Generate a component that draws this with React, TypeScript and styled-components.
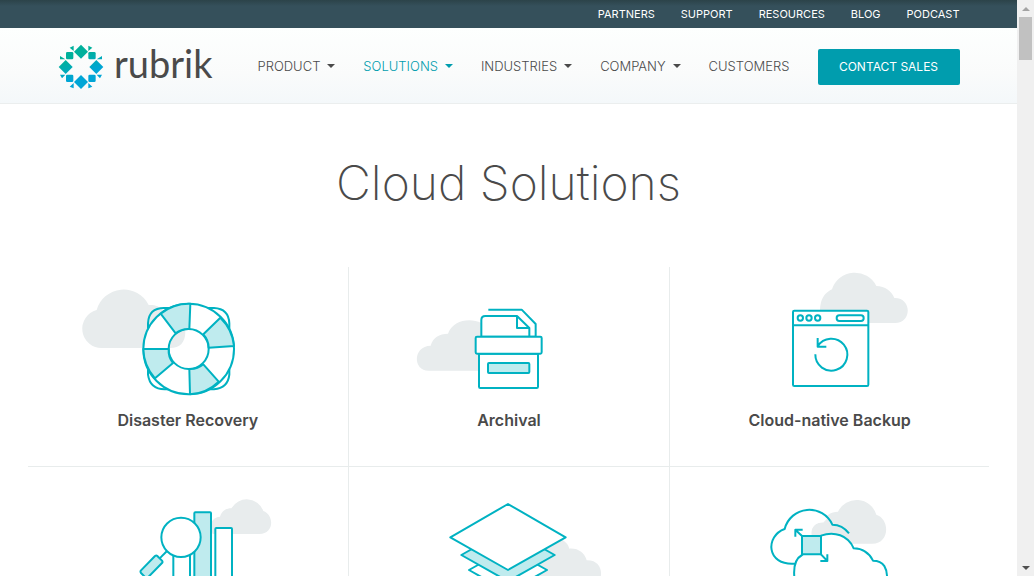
import React from "react";
import styled, { createGlobalStyle } from "styled-components";

const teal = "#00b2c2";
const tint = "#bfebee";
const haze = "#e8eced";
const ink = "#4a4a4a";

const GlobalStyle = createGlobalStyle`
  * { box-sizing: border-box; }
  body { margin: 0; background: #fff; color: ${ink}; font-family: Inter, "Liberation Sans", sans-serif; }
  ul { list-style: none; margin: 0; padding: 0; }
  a { color: inherit; text-decoration: none; }
`;

const Window = styled.div`
  display: grid;
  grid-template-columns: minmax(0, 1fr) 17px;
  height: 100vh;
  overflow: hidden;
`;

const Page = styled.div`
  overflow: hidden;
`;

const Container = styled.div`
  max-width: 962px;
  margin: 0 auto;
`;

const TopBar = styled.div`
  background: linear-gradient(#2c4349, #35505b 6px);
  color: #fff;
`;

const TopLinks = styled.ul`
  display: flex;
  justify-content: flex-end;
  gap: 26px;
  padding: 0 30px;
  font-size: 11px;
  line-height: 28px;
`;

const Header = styled.header`
  background: linear-gradient(#fdfffe, #fafbfb 60%, #f4f8fa);
  border-bottom: 1px solid #ebeeee;
`;

const HeaderRow = styled(Container)`
  display: flex;
  align-items: center;
  height: 75px;
  padding: 2px 30px 0;
`;

const Logo = styled.a`
  display: flex;
  align-items: center;
  justify-content: space-between;
  width: 155px;
  height: 46px;
  svg { flex: none; }
`;

const Wordmark = styled.span`
  font-family: Lato, sans-serif;
  font-size: 38px;
  line-height: 38px;
  height: 46px;
`;

const Nav = styled.nav`
  flex: 1;
  margin: 0 28px 0 45px;
  padding-bottom: 2px;
`;

const NavList = styled.ul`
  display: flex;
  justify-content: space-between;
`;

const NavLink = styled.a<{ $active?: boolean }>`
  display: flex;
  align-items: center;
  gap: 7px;
  font-size: 13px;
  line-height: 20px;
  font-weight: 300;
  color: ${(p) => (p.$active ? "#009dae" : ink)};
`;

const Caret = styled.span`
  border: 4px solid transparent;
  border-top-color: currentColor;
  border-bottom: 0;
`;

const Contact = styled.button`
  width: 142px;
  height: 36px;
  padding: 0;
  border: 0;
  border-radius: 2px;
  background: #009dae;
  color: #fff;
  font: 400 12px/36px Inter, sans-serif;
`;

const Title = styled.h1`
  margin: 0;
  padding: 51px 0 56px;
  font-size: 48px;
  line-height: 56px;
  font-weight: 200;
  text-align: center;
`;

const Grid = styled.ul`
  display: grid;
  grid-template-columns: repeat(3, 1fr);
`;

const Cell = styled.li`
  border-left: 1px solid #e8ecec;
  border-bottom: 1px solid #e8ecec;
  min-height: 200px;
  &:nth-child(3n + 1) { border-left: 0; }
`;

const Card = styled.a`
  display: flex;
  flex-direction: column;
  align-items: center;
  gap: 11px;
  padding-bottom: 34px;
`;

const Art = styled.svg`
  width: 220px;
  height: 130px;
  fill: none;
  stroke: ${teal};
  stroke-width: 6;
  stroke-linejoin: round;
`;

const Label = styled.span`
  font-size: 16px;
  line-height: 24px;
  font-weight: 600;
`;

const ScrollTrack = styled.div`
  display: flex;
  flex-direction: column;
  align-items: center;
  background: #f0f0f0;
`;

const ScrollArrow = styled.span<{ $down?: boolean }>`
  display: flex;
  align-items: center;
  justify-content: center;
  width: 17px;
  height: 17px;
  &::before {
    content: "";
    border: 4px solid transparent;
    ${(p) => (p.$down ? "border-top-color: #505050; border-bottom: 0;" : "border-bottom-color: #a3a3a3; border-top: 0;")}
  }
`;

const Thumb = styled.div`
  width: 13px;
  height: 43px;
  margin-bottom: auto;
  background: #c1c1c1;
`;

const Mark = () => (
  <svg width="46" height="46" viewBox="54 39 138 138" aria-hidden="true">
    <defs>
      <linearGradient id="mark" gradientUnits="userSpaceOnUse" x1="90" y1="60" x2="130" y2="160">
        <stop offset="0.2" stopColor="#00b09b" />
        <stop offset="0.75" stopColor="#00a5d6" />
      </linearGradient>
    </defs>
    <g fill="url(#mark)">
      <path d="M123 41L144 62L123 83L102 62Z" />
      <path d="M77 87L98 108L77 129L56 108Z" />
      <path d="M169 87L190 108L169 129L148 108Z" />
      <path d="M123 132L144 153L123 174L102 153Z" />
      <rect x="78" y="63" width="22" height="22" rx="4" />
      <rect x="145" y="63" width="22" height="22" rx="4" />
      <rect x="78" y="131" width="22" height="22" rx="4" />
      <rect x="145" y="131" width="22" height="22" rx="4" />
      <path d="M89 50L101 44V60ZM145 44L157 50L145 60ZM60 75L76 85H60ZM186 75V85H170ZM60 131H76L66 142ZM170 131H186L180 142ZM101 156V172L89 167ZM145 156L157 167L145 172Z" />
    </g>
  </svg>
);

const Haze = ({ d }: { d: string }) => <path d={d} fill={haze} stroke="none" />;

const Recovery = () => (
  <Art viewBox="24 -39 660 390" aria-hidden="true">
    <Haze d="M98 204A58 58 0 0 1 80 90A84 84 0 0 1 236 75C256 74 268 79 280 92C325 92 346 120 346 155C346 187 330 204 300 204Z" />
    <path d="M234 145V130Q236 84 282 84H300M414 84H432Q476 86 478 130V146M234 268V284Q240 328 284 328H300M414 328H432Q474 324 478 284V268" />
    <path fill="#fff" fillRule="evenodd" d="M356 71A136 136 0 1 1 356 343A136 136 0 1 1 356 71ZM356 147A60 60 0 1 0 356 267A60 60 0 1 0 356 147Z" />
    <g fill={tint}>
      <path d="M361 71L358 147A60 60 0 0 0 317 160L272 101A136 136 0 0 1 361 71Z" />
      <path d="M451 113L400 163A60 60 0 0 1 416 203L492 198A136 136 0 0 0 451 113Z" />
      <path d="M446 305L400 253A60 60 0 0 1 358 267L360 343A136 136 0 0 0 446 305Z" />
      <path d="M255 295L309 249A60 60 0 0 1 296 207H220A136 136 0 0 0 255 295Z" />
    </g>
  </Art>
);

const Archive = () => (
  <Art viewBox="-3 -69 660 390" aria-hidden="true">
    <Haze d="M86 242C38 242 38 168 92 167C98 143 118 131 144 131C158 92 208 82 244 99V242Z" />
    <path fill="#fff" d="M265 59H365L407 102V140H244V90Q244 78 256 78H351L388 114V140" />
    <path stroke="#fff" strokeWidth="8" d="M244 71V63H262" />
    <path d="M351 78V114H388" />
    <path fill="#fff" d="M237 191H414V290Q414 294 410 294H241Q237 294 237 290Z" />
    <rect x="227" y="140" width="198" height="51" rx="4" fill="#fff" />
    <rect x="264" y="219" width="124" height="30" rx="3" fill={tint} />
  </Art>
);

const Backup = () => (
  <Art viewBox="-33 15 660 390" aria-hidden="true">
    <Haze d="M270 183C262 125 271 98 303 82A72 72 0 0 1 436 72C462 72 482 87 490 108C542 106 545 183 492 183Z" />
    <rect x="186" y="146" width="226" height="226" rx="4" fill="#fff" />
    <path d="M186 190H412" />
    <circle cx="208" cy="168" r="8" />
    <circle cx="234" cy="168" r="8" />
    <circle cx="260" cy="168" r="8" />
    <rect x="317" y="160" width="81" height="17" rx="8" />
    <path d="M253 277A48 48 0 1 0 260 253M260 228V254H286" />
  </Art>
);

const Analytics = () => (
  <Art viewBox="-126 -69 660 390" aria-hidden="true">
    <Haze d="M278 132C268 104 274 82 300 80C306 62 318 55 334 55A53 53 0 0 1 430 63C464 76 462 132 418 132Z" />
    <path fill="#fff" d="M160 330V180H210V330Z" />
    <rect x="223" y="67" width="50" height="270" rx="3" fill={tint} />
    <rect x="286" y="114" width="50" height="220" rx="3" fill="#fff" />
    <circle cx="183" cy="142" r="59" fill="#fff" />
    <path d="M141 183L119 205" />
    <path fill={tint} d="M105 198Q109 195 112 198L126 212Q129 216 126 219L84 262Q79 265 76 262L63 249Q60 244 63 241Z" />
  </Art>
);

const Layers = () => (
  <Art viewBox="-93 -69 660 390" aria-hidden="true">
    <Haze d="M395 148Q414 160 418 176C445 174 464 189 470 211C510 210 520 245 509 270Q500 285 480 285H250V200Z" />
    <path fill="#fff" d="M234 174L351 240L234 306L117 240Z" />
    <path fill={tint} d="M234 116L374 195L234 274L94 195Z" />
    <path fill="#fff" d="M234 42L407 142L234 240L61 142Z" />
  </Art>
);

const Migration = () => (
  <Art viewBox="-93 -69 660 390" aria-hidden="true">
    <Haze d="M216 161C164 161 172 95 218 97C222 77 240 65 261 65A62 62 0 0 1 376 74C418 88 416 161 364 161Z" />
    <path fill="#fff" stroke="none" d="M132 221C44 228 43 137 101 117A76 76 0 0 1 211 76Q224 86 236 78L218 97Q176 98 182 137H210L153 195Z" />
    <path d="M294 130Q274 104 244 104A76 76 0 0 0 101 117C43 137 44 228 132 221" />
    <path fill="#fff" d="M131 270C126 233 133 206 153 195L210 137C249 122 292 136 308 175Q348 176 366 212C399 212 410 236 408 270" />
    <rect x="153" y="138" width="57" height="55" fill={tint} />
    <path d="M153 138L133 119M133 140V119H155M210 193L229 213M229 193V213H208" />
  </Art>
);

const topLinks = ["PARTNERS", "SUPPORT", "RESOURCES", "BLOG", "PODCAST"];

const navLinks = [
  { text: "PRODUCT", menu: true },
  { text: "SOLUTIONS", menu: true, active: true },
  { text: "INDUSTRIES", menu: true },
  { text: "COMPANY", menu: true },
  { text: "CUSTOMERS" },
];

const solutions = [
  { art: <Recovery />, label: "Disaster Recovery" },
  { art: <Archive />, label: "Archival" },
  { art: <Backup />, label: "Cloud-native Backup" },
  { art: <Analytics /> },
  { art: <Layers /> },
  { art: <Migration /> },
];

export default function App() {
  return (
    <Window>
      <GlobalStyle />
      <Page>
        <TopBar>
          <Container>
            <TopLinks>
              {topLinks.map((t) => (
                <li key={t}><a href="#">{t}</a></li>
              ))}
            </TopLinks>
          </Container>
        </TopBar>
        <Header>
          <HeaderRow>
            <Logo href="#">
              <Mark />
              <Wordmark>rubrik</Wordmark>
            </Logo>
            <Nav>
              <NavList>
                {navLinks.map((n) => (
                  <li key={n.text}>
                    <NavLink href="#" $active={n.active}>
                      {n.text}
                      {n.menu && <Caret />}
                    </NavLink>
                  </li>
                ))}
              </NavList>
            </Nav>
            <Contact type="button">CONTACT SALES</Contact>
          </HeaderRow>
        </Header>
        <Container as="main">
          <Title>Cloud Solutions</Title>
          <Grid>
            {solutions.map((s, i) => (
              <Cell key={i}>
                <Card href="#">
                  {s.art}
                  {s.label && <Label>{s.label}</Label>}
                </Card>
              </Cell>
            ))}
          </Grid>
        </Container>
      </Page>
      <ScrollTrack aria-hidden="true">
        <ScrollArrow />
        <Thumb />
        <ScrollArrow $down />
      </ScrollTrack>
    </Window>
  );
}
